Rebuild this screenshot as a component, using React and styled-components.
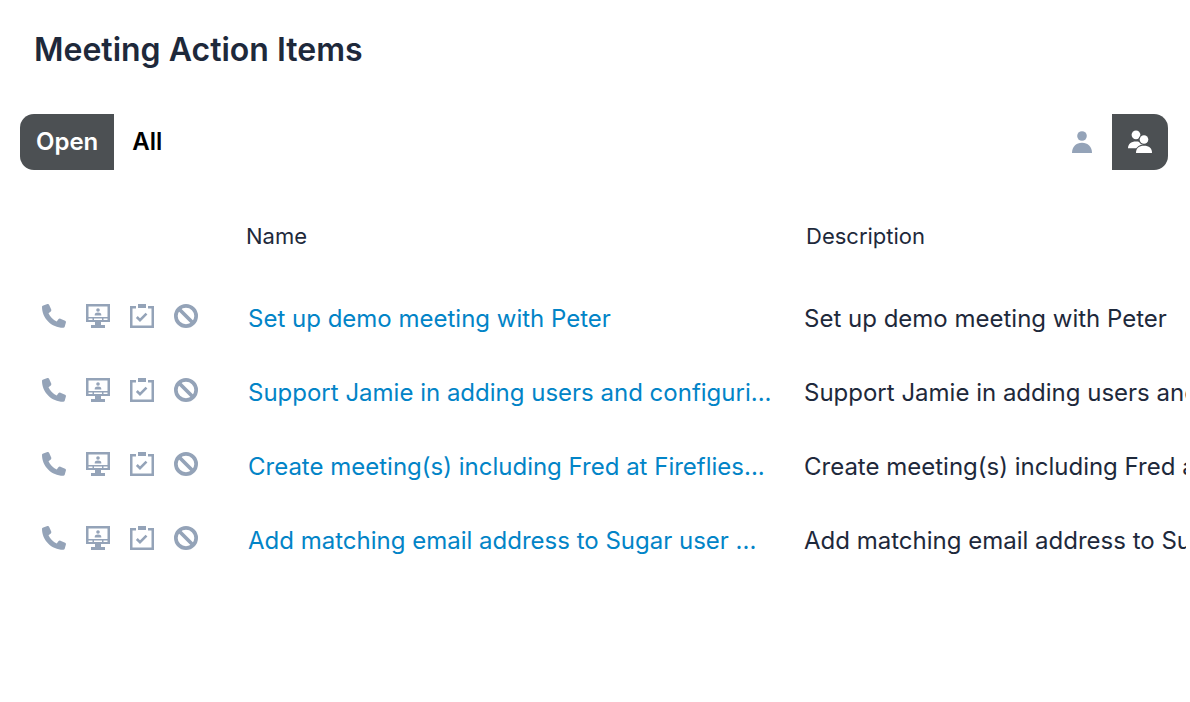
import React, { useState } from "react";
import styled, { createGlobalStyle, css } from "styled-components";

const GlobalStyle = createGlobalStyle`
  * {
    box-sizing: border-box;
  }

  body {
    margin: 0;
    background-color: #ffffff;
    color: #1e293b;
    font-family: Inter, "Liberation Sans", sans-serif;
  }
`;

const Dashlet = styled.main`
  margin-right: 4px;
  padding-top: 30px;
  overflow: hidden;
`;

const Title = styled.h1`
  margin: 0;
  padding-left: 34px;
  font-size: 32px;
  font-weight: 600;
  line-height: 40px;
`;

const Toolbar = styled.div`
  display: flex;
  justify-content: space-between;
  margin-top: 44px;
  padding: 0 18px 0 20px;
`;

const ButtonGroup = styled.div`
  display: flex;
  gap: 2px;
`;

const activeStyle = css`
  background-color: #4c5053;
  color: #ffffff;
`;

const FilterButton = styled.button`
  height: 56px;
  padding: 0 16px 2px;
  border: none;
  background-color: transparent;
  color: #000000;
  font-family: inherit;
  font-size: 24px;
  font-weight: 600;
  cursor: pointer;

  &:first-child {
    border-radius: 14px 0 0 14px;
  }

  ${props => props.$active && activeStyle}
`;

const OwnerButton = styled.button`
  display: flex;
  align-items: center;
  justify-content: center;
  width: 56px;
  height: 56px;
  padding: 0;
  border: none;
  background-color: transparent;
  color: #94a3b8;
  cursor: pointer;

  &:last-child {
    border-radius: 0 14px 14px 0;
  }

  ${props => props.$active && activeStyle}
`;

const Table = styled.table`
  width: 100%;
  margin-top: 30px;
  border-collapse: collapse;
  table-layout: fixed;
`;

const HeaderCell = styled.th`
  width: ${props => props.$width || "auto"};
  height: 79px;
  padding: 0 0 7px 2px;
  font-size: 22px;
  font-weight: 400;
  text-align: left;
`;

const Cell = styled.td`
  height: 74px;
  padding: 0;
`;

const TextCell = styled(Cell)`
  padding-top: 5px;
  overflow: hidden;
  font-size: 24px;
  line-height: 32px;
  white-space: nowrap;
`;

const Actions = styled.div`
  display: flex;
  gap: 20px;
  padding-left: 42px;
`;

const ActionButton = styled.button`
  display: flex;
  padding: 0;
  border: none;
  background: none;
  color: #94a3b8;
  cursor: pointer;
`;

const ItemLink = styled.a`
  padding-left: 4px;
  color: #0284c7;
  text-decoration: none;
`;

const Icon = ({ children }) => (
  <svg width="24" height="24" viewBox="0 0 24 24" fill="currentColor" aria-hidden="true">
    {children}
  </svg>
);

const PhoneIcon = () => (
  <Icon>
    <path d="M1.3 1.4 5.4.1c.8-.2 1.5.1 1.8.8l2 4.7c.3.7.1 1.3-.4 1.8L6.5 9.3c1.6 3.6 4.5 6.5 8.2 8.2l1.9-2.4c.5-.6 1.1-.7 1.8-.4l4.7 2c.7.3 1 1 .8 1.7l-1.2 4.3c-.2.7-.7 1.1-1.5 1.1C9.5 23.8 0 14.3 0 2.8c0-.7.5-1.2 1.3-1.4Z" />
  </Icon>
);

const MeetingIcon = () => (
  <Icon>
    <path
      fillRule="evenodd"
      d="M0 0h24v18h-9v3h4v3H5v-3h4v-3H0Zm2.5 2.500v10.500h19V2.500Zm0 12v1.500h4v-1.500Zm5.500 0v1.500h8v-1.500Zm9.500 0v1.500h4v-1.500Z"
    />
    <circle cx="12" cy="6" r="1.8" />
    <path d="M8.7 11.5v-.6c0-1.600 1.300-2.300 3.300-2.300s3.300.7 3.300 2.300v.6Z" />
  </Icon>
);

const TaskIcon = () => (
  <Icon>
    <path d="M8 0h8v4H8Z" />
    <path d="M0 2h6v2.500H2.500v17h19v-17H18V2h6v22H0Z" />
    <path d="m6.800 13 3.200 3.200 6.500-6.500" fill="none" stroke="currentColor" strokeWidth="2.600" />
  </Icon>
);

const DismissIcon = () => (
  <Icon>
    <g fill="none" stroke="currentColor" strokeWidth="3.700">
      <circle cx="12" cy="12" r="10.150" />
      <path d="m5 5 14 14" />
    </g>
  </Icon>
);

const UserIcon = () => (
  <Icon>
    <circle cx="12" cy="6" r="4.800" />
    <path d="M2 23C2 16.500 6.200 12.700 12 12.700S22 16.500 22 23Z" />
  </Icon>
);

const UsersIcon = () => (
  <Icon>
    <mask id="users-cutout">
      <path d="M0 0h24v24H0Z" fill="#ffffff" />
      <circle cx="16" cy="9.500" r="5.400" fill="#000000" />
      <path d="M7 23.500c0-5.800 3.400-9 9-9s9 3.200 9 9Z" fill="#000000" />
    </mask>
    <g mask="url(#users-cutout)">
      <circle cx="8" cy="4.800" r="4.400" />
      <path d="M0 18.300c0-4.500 3-6.900 8-6.900s8 2.400 8 6.900Z" />
    </g>
    <circle cx="16" cy="9.500" r="4.300" />
    <path d="M8 23c0-4.700 3-7.200 8-7.200s8 2.500 8 7.200Z" />
  </Icon>
);

const actions = [
  { label: "Log call", icon: PhoneIcon },
  { label: "Schedule meeting", icon: MeetingIcon },
  { label: "Create task", icon: TaskIcon },
  { label: "Dismiss", icon: DismissIcon }
];

const items = [
  {
    name: "Set up demo meeting with Peter",
    description: "Set up demo meeting with Peter"
  },
  {
    name: "Support Jamie in adding users and configuri...",
    description: "Support Jamie in adding users and configuring"
  },
  {
    name: "Create meeting(s) including Fred at Fireflies...",
    description: "Create meeting(s) including Fred at Fireflies"
  },
  {
    name: "Add matching email address to Sugar user ...",
    description: "Add matching email address to Sugar user"
  }
];

const ActionItemRow = ({ item: { name, description } }) => (
  <tr>
    <Cell>
      <Actions>
        {actions.map(({ label, icon: ActionIcon }) => (
          <ActionButton key={label} type="button" aria-label={label}>
            <ActionIcon />
          </ActionButton>
        ))}
      </Actions>
    </Cell>
    <TextCell>
      <ItemLink href="#">{name}</ItemLink>
    </TextCell>
    <TextCell>{description}</TextCell>
  </tr>
);

const App = () => {
  const [filter, setFilter] = useState("Open");
  const [owner, setOwner] = useState("team");

  return (
    <>
      <GlobalStyle />
      <Dashlet>
        <Title>Meeting Action Items</Title>
        <Toolbar>
          <ButtonGroup>
            {["Open", "All"].map(label => (
              <FilterButton
                key={label}
                type="button"
                $active={filter === label}
                onClick={() => setFilter(label)}
              >
                {label}
              </FilterButton>
            ))}
          </ButtonGroup>
          <ButtonGroup>
            <OwnerButton
              type="button"
              aria-label="My items"
              $active={owner === "me"}
              onClick={() => setOwner("me")}
            >
              <UserIcon />
            </OwnerButton>
            <OwnerButton
              type="button"
              aria-label="Team items"
              $active={owner === "team"}
              onClick={() => setOwner("team")}
            >
              <UsersIcon />
            </OwnerButton>
          </ButtonGroup>
        </Toolbar>
        <Table>
          <thead>
            <tr>
              <HeaderCell $width="244px" aria-label="Actions" />
              <HeaderCell $width="560px">Name</HeaderCell>
              <HeaderCell>Description</HeaderCell>
            </tr>
          </thead>
          <tbody>
            {items.map(item => (
              <ActionItemRow key={item.name} item={item} />
            ))}
          </tbody>
        </Table>
      </Dashlet>
    </>
  );
};

export default App;
